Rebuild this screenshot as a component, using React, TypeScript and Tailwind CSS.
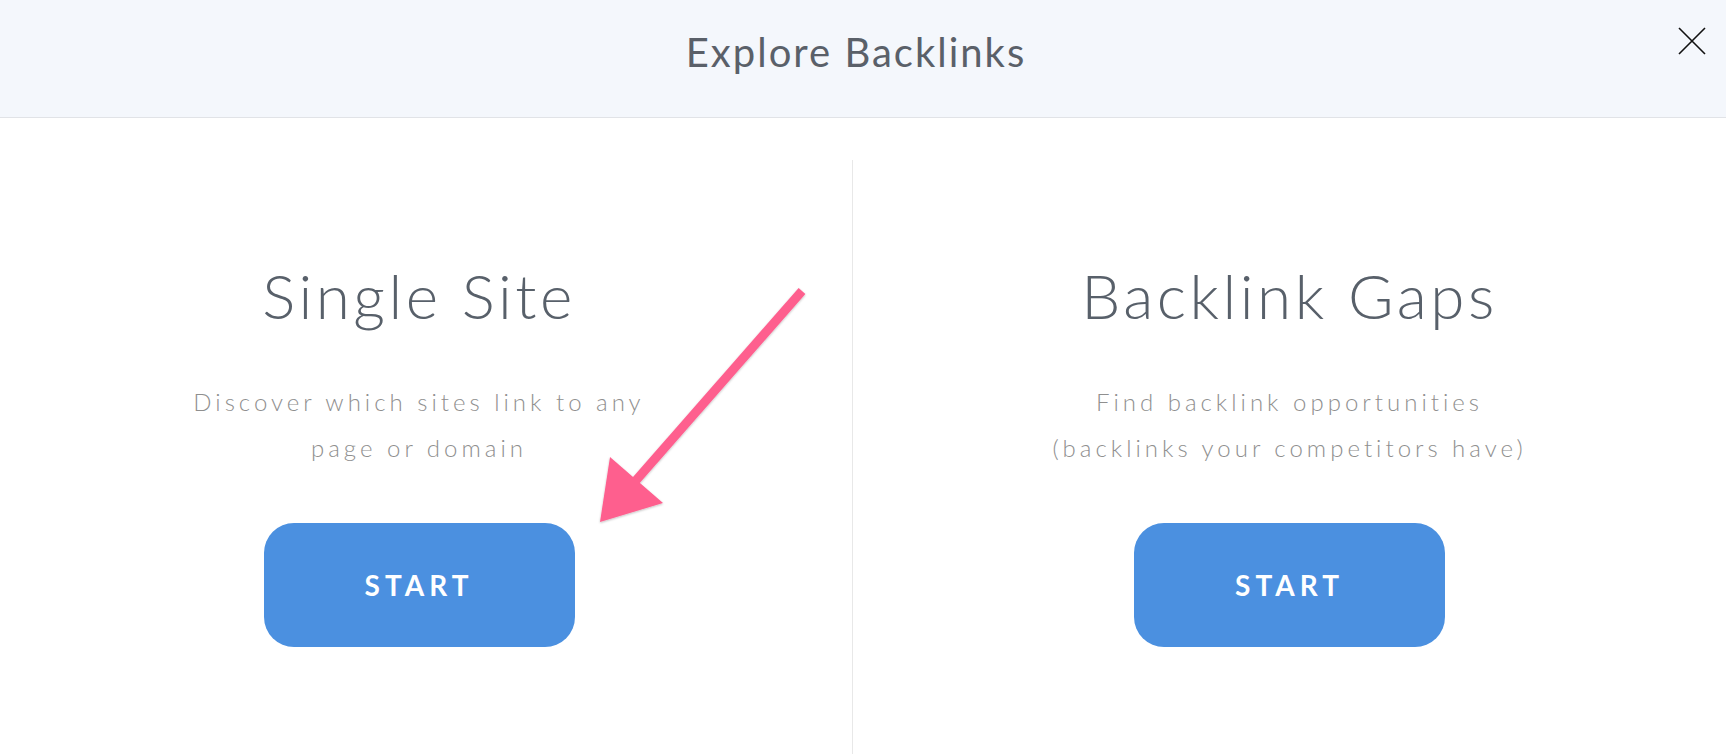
import React from "react";

// ============ Pieces ============

const CloseIcon: React.FC = () => (
  <svg width="28" height="28" viewBox="0 0 28 28" fill="none">
    <path d="M1 1L27 27M27 1L1 27" stroke="#111" strokeWidth="1.6" />
  </svg>
);

// pink annotation arrow laid over the left card
const PinkArrow: React.FC = () => (
  <svg
    className="pointer-events-none absolute left-0 top-0"
    width="1726"
    height="754"
    viewBox="0 0 1726 754"
  >
    <defs>
      <filter id="arrowShadow" x="-20%" y="-20%" width="140%" height="140%">
        <feDropShadow dx="0" dy="1" stdDeviation="1.2" floodColor="#000" floodOpacity="0.25" />
      </filter>
    </defs>
    <g filter="url(#arrowShadow)" fill="#fe5f8e">
      <line x1="802" y1="291" x2="632" y2="485" stroke="#fe5f8e" strokeWidth="9" />
      <polygon points="600,522 610,457 663,503" />
    </g>
  </svg>
);

interface OptionCardProps {
  title: string;
  lines: string[];
}

const OptionCard: React.FC<OptionCardProps> = ({ title, lines }) => (
  <div className="flex flex-col items-center pt-[98px]">
    <h2 className="text-[62px] leading-[1.2] font-light tracking-[3.5px] text-[#58606a]">
      {title}
    </h2>
    <p className="mt-[47px] text-center text-[24px] leading-[46px] font-light tracking-[4px] text-[#8f8f8f]">
      {lines.map((l) => (
        <span key={l} className="block">
          {l}
        </span>
      ))}
    </p>
    <button
      type="button"
      className="mt-[52px] flex h-[124px] w-[311px] items-center justify-center rounded-[30px] bg-[#4b90e0] text-[28px] font-bold tracking-[5px] text-white"
    >
      START
    </button>
  </div>
);

// ============ Page ============

export default function App() {
  return (
    <div className="relative h-[754px] w-[1726px] overflow-hidden bg-white font-['Lato',sans-serif]">
      <header className="relative flex h-[118px] items-center justify-center border-b border-[#e1e3e7] bg-[#f4f7fc]">
        <h1 className="mr-[14px] pb-[14px] text-[40px] tracking-[2px] text-[#5a6069]">Explore Backlinks</h1>
        <button type="button" className="absolute right-[20px] top-[27px]">
          <CloseIcon />
        </button>
      </header>

      <div className="flex h-[636px] pt-[42px]">
        <div className="w-[838px]">
          <OptionCard
            title="Single Site"
            lines={["Discover which sites link to any", "page or domain"]}
          />
        </div>
        <div className="ml-[14px] flex-1 border-l border-[#e8e8e8]">
          <OptionCard
            title="Backlink Gaps"
            lines={["Find backlink opportunities", "(backlinks your competitors have)"]}
          />
        </div>
      </div>

      <PinkArrow />
    </div>
  );
}
